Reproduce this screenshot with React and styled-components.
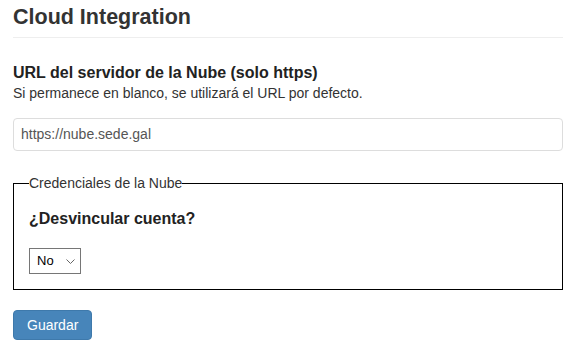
import React, { useState } from 'react';
import styled, { createGlobalStyle } from 'styled-components';

const GlobalStyle = createGlobalStyle`
  body {
    margin: 0;
    background: #fff;
    font-family: "Liberation Sans", Arial, sans-serif;
    color: #333;
  }
`;

const Page = styled.div`
  padding: 6px 8px 0 13px;
`;

const Header = styled.div`
  border-bottom: 1px solid #eee;
  padding-bottom: 7px;
`;

const Title = styled.h2`
  margin: 0;
  font-size: 21.5px;
  line-height: 1.1;
  font-weight: bold;
  color: #333;
`;

const Field = styled.div`
  margin-top: 25px;
`;

const Label = styled.div`
  font-size: 16px;
  font-weight: bold;
  line-height: 1.2;
  color: #222;
`;

const Help = styled.div`
  font-size: 14px;
  line-height: 1.2;
  margin-top: 3px;
  color: #333;
`;

const TextInput = styled.input`
  display: block;
  box-sizing: border-box;
  width: 100%;
  height: 33px;
  margin-top: 16px;
  padding: 0 7px;
  border: 1px solid #ddd;
  border-radius: 4px;
  font-family: inherit;
  font-size: 14px;
  color: #555;
  outline: none;

  &::placeholder {
    color: #555;
    opacity: 1;
  }
`;

const Fieldset = styled.fieldset`
  margin: 24px 0 0;
  padding: 18px 15px 15px;
  border: 1px solid #000;
  min-width: 0;
`;

const Legend = styled.legend`
  padding: 0;
  font-size: 14px;
  line-height: 1.2;
  color: #333;
`;

const Question = styled.div`
  font-size: 16px;
  font-weight: bold;
  line-height: 1.2;
  color: #222;
  margin-bottom: 19px;
`;

const SelectWrap = styled.div`
  position: relative;
  width: 52px;
  height: 26px;
`;

const Select = styled.select`
  appearance: none;
  box-sizing: border-box;
  width: 100%;
  height: 100%;
  padding: 0 0 0 7px;
  border: 1px solid #767676;
  border-radius: 0;
  background: #fff;
  font-family: inherit;
  font-size: 13px;
  color: #000;
  outline: none;
`;

const Chevron = styled.svg`
  position: absolute;
  right: 6px;
  top: 11px;
  pointer-events: none;
`;

const Button = styled.button`
  margin-top: 20px;
  height: 30px;
  padding: 0 13px;
  border: 1px solid #3e79ab;
  border-radius: 4px;
  background: #4785ba;
  color: #fff;
  font-family: inherit;
  font-size: 14px;
`;

export default function App() {
  const [url, setUrl] = useState('');
  const [unlink, setUnlink] = useState('no');

  return (
    <Page>
      <GlobalStyle />
      <Header>
        <Title>Cloud Integration</Title>
      </Header>
      <Field>
        <Label>URL del servidor de la Nube (solo https)</Label>
        <Help>Si permanece en blanco, se utilizará el URL por defecto.</Help>
        <TextInput
          value={url}
          placeholder="https://nube.sede.gal"
          onChange={e => setUrl(e.target.value)}
        />
      </Field>
      <Fieldset>
        <Legend>Credenciales de la Nube</Legend>
        <Question>¿Desvincular cuenta?</Question>
        <SelectWrap>
          <Select value={unlink} onChange={e => setUnlink(e.target.value)}>
            <option value="no">No</option>
            <option value="si">Sí</option>
          </Select>
          <Chevron width="9" height="5" viewBox="0 0 9 5">
            <path d="M0.5 0.5 L4.5 4.5 L8.5 0.5" fill="none" stroke="#666" strokeWidth="1" />
          </Chevron>
        </SelectWrap>
      </Fieldset>
      <Button type="button">Guardar</Button>
    </Page>
  );
}
